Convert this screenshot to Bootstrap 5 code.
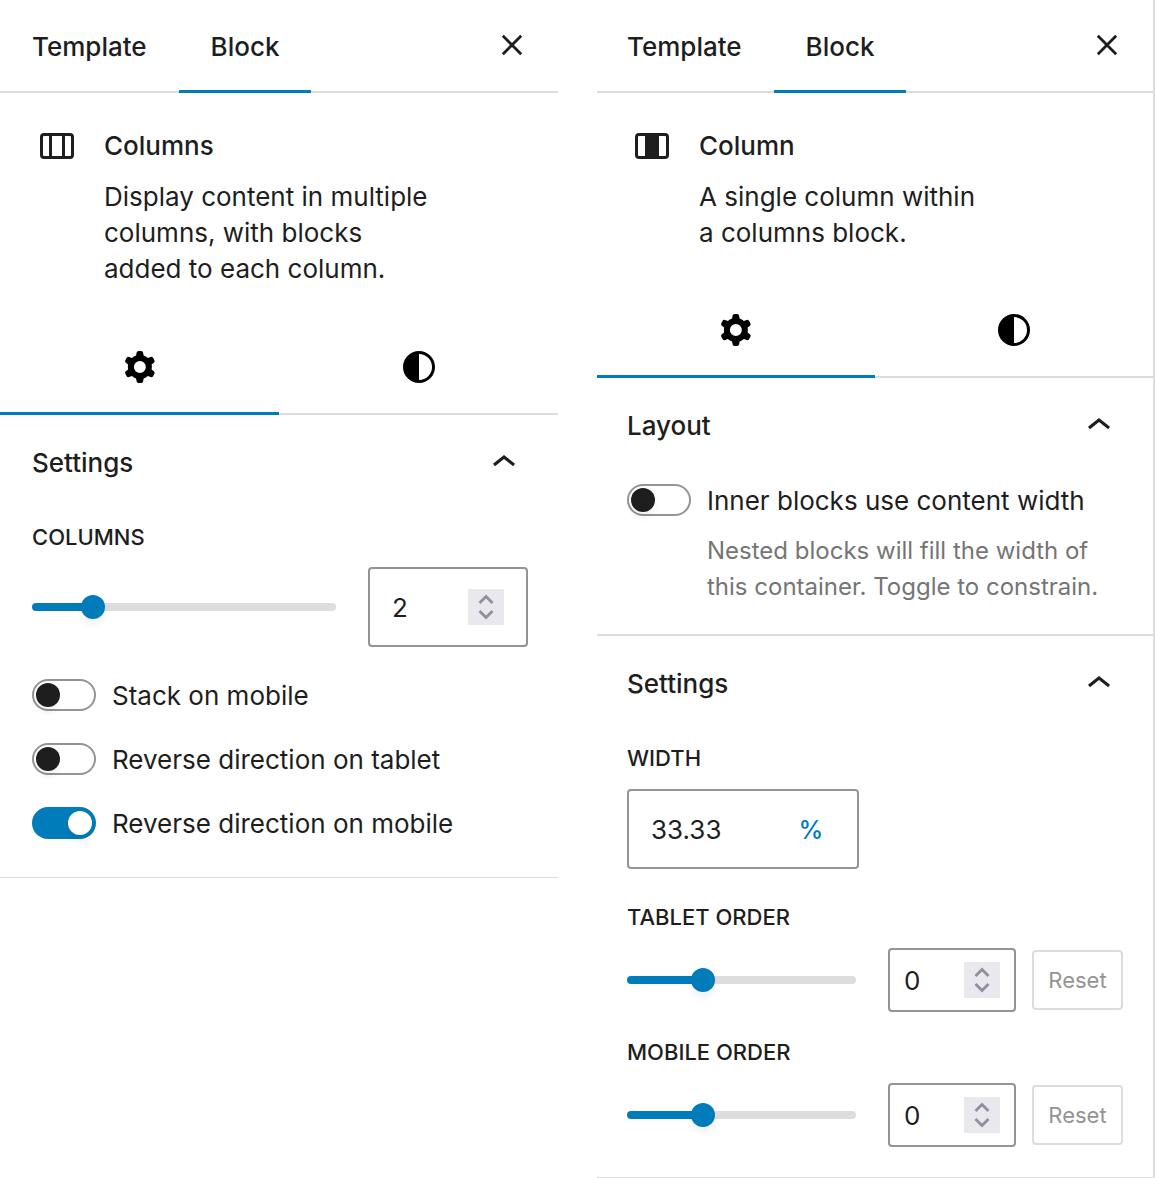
<!DOCTYPE html>
<html lang="en">
<head>
<meta charset="utf-8">
<meta name="viewport" content="width=device-width, initial-scale=1">
<title>Block settings</title>
<link href="https://cdn.jsdelivr.net/npm/bootstrap@5.3.0/dist/css/bootstrap.min.css" rel="stylesheet">
<style>
  :root { --ink: #1e1e1e; --accent: #007cba; --line: #ddd; --edge: #949494; }
  body { font-family: Inter, "Liberation Sans", sans-serif; font-size: 26px; line-height: 36px; color: var(--ink); background: #fff; }
  .sidebars { grid-template-columns: minmax(0, 1fr) minmax(0, 1fr); gap: 39px; }
  .inspector { --start: 32px; --card-end: 32px; --label-gap: 14px; }
  .inspector-edge { --start: 30px; --card-end: 31px; --label-gap: 15px; border-right: 2px solid var(--line); }
  button { color: inherit; }
  svg { display: block; fill: currentColor; }

  .tabs-top { border-bottom: 2px solid var(--line); padding-right: 22px; }
  .tabs-top .tab { height: 93px; margin-bottom: -2px; padding: 0 32px; border: 0; background: none; font-weight: 500; }
  .tabs-top .tab:first-child { padding-left: var(--start); }
  .tab.active { box-shadow: inset 0 -3px var(--accent); }

  .block-card { padding: 32px 30px var(--card-end) var(--start); gap: 24px; }
  .block-card h2 { font-size: 26px; line-height: 42px; font-weight: 500; margin-bottom: 12px; }

  .tabs-icons { border-bottom: 2px solid var(--line); color: #000; }
  .tabs-icons .tab { height: 96px; margin-bottom: -2px; border: 0; background: none; }

  .section-toggle { height: 96px; padding: 0 30px 0 var(--start); border: 0; background: none; font-weight: 500; }
  .section-body { padding: 10px 30px 30px var(--start); }
  .section-rule { border-bottom: 2px solid var(--line); }
  .section-end { border-bottom: 1px solid var(--line); }
  .section-roomy { padding-bottom: 38px; }

  .caps { display: block; font-size: 22px; line-height: 32px; font-weight: 500; text-transform: uppercase; margin-bottom: var(--label-gap); }

  .slider { height: 8px; border-radius: 4px; background: linear-gradient(to right, var(--accent) var(--fill), var(--line) var(--fill)); margin-right: 32px; min-width: 0; }
  .slider input { flex: none; width: calc(100% + 24px); height: 24px; margin: 0 -12px; appearance: none; background: none; }
  .slider input::-webkit-slider-thumb { appearance: none; width: 24px; height: 24px; border-radius: 50%; background: var(--accent); box-shadow: 0 6px 6px rgba(0,0,0,.05); }
  .slider input::-moz-range-thumb { width: 24px; height: 24px; border: 0; border-radius: 50%; background: var(--accent); }

  .field { border: 2px solid var(--edge); border-radius: 4px; height: 64px; width: 128px; padding: 0 14px; }
  .field-lg { height: 80px; width: 160px; padding: 0 22px; }
  .field-half { width: calc(50% - 16px); }
  .field input { flex: 1; min-width: 0; border: 0; padding: 2px 0 0; background: none; color: var(--ink); appearance: textfield; outline: 0; }
  .field input::-webkit-inner-spin-button { appearance: none; display: none; }
  .field select { width: 48px; border: 0; background: none; appearance: none; color: var(--accent); text-align: center; padding: 2px 0 0; font-size: 25px; font-weight: 500; outline: 0; }
  .spinner { width: 36px; height: 36px; background: #e9e8ed; color: #8f8f9d; flex: none; }
  .reset { width: 91px; height: 60px; border: 2px solid var(--line); border-radius: 4px; background: none; color: var(--edge); font-size: 22px; padding: 0; margin-left: 16px; flex: none; }

  .toggles { gap: 32px; margin-top: 32px; }
  .toggle-row { gap: 16px; height: 32px; }
  .toggle-row .form-check-input { width: 64px; height: 32px; margin: 0; flex: none; border: 2px solid var(--edge); border-radius: 16px; background: #fff; padding: 2px; }
  .toggle-row .form-check-input::before { content: ""; display: block; width: 24px; height: 24px; border-radius: 50%; background: var(--ink); box-shadow: 0 6px 6px rgba(0,0,0,.05); }
  .toggle-row .form-check-input:checked { background: var(--accent); border-color: var(--accent); }
  .toggle-row .form-check-input:checked::before { background: #fff; margin-left: auto; }
  .toggle-row label { line-height: 32px; padding-top: 2px; }
  .help { margin: 17px 0 -1px 80px; font-size: 24px; color: #757575; white-space: nowrap; }
</style>
</head>
<body>
<svg width="0" height="0" class="position-absolute" aria-hidden="true">
  <symbol id="i-close" viewBox="0 0 48 48"><path d="M14.8 13.8 33.2 32.2M33.2 13.8 14.8 32.2" fill="none" stroke="currentColor" stroke-width="2.8"/></symbol>
  <symbol id="i-cog" viewBox="0 0 24 24"><path fill-rule="evenodd" d="M10.289 4.836A1 1 0 0111.275 4h1.306a1 1 0 01.987.836l.244 1.466c.787.26 1.503.679 2.108 1.218l1.393-.522a1 1 0 011.216.437l.653 1.13a1 1 0 01-.23 1.273l-1.148.944a6.025 6.025 0 010 2.435l1.149.946a1 1 0 01.23 1.272l-.653 1.13a1 1 0 01-1.216.437l-1.394-.522c-.605.54-1.32.958-2.108 1.218l-.244 1.466a1 1 0 01-.987.836h-1.306a1 1 0 01-.986-.836l-.244-1.466a5.995 5.995 0 01-2.108-1.218l-1.394.522a1 1 0 01-1.217-.436l-.653-1.131a1 1 0 01.23-1.272l1.149-.946a6.026 6.026 0 010-2.435l-1.148-.944a1 1 0 01-.23-1.272l.653-1.131a1 1 0 011.217-.437l1.393.522a5.994 5.994 0 012.108-1.218l.244-1.466zM14.929 12a3 3 0 11-6 0 3 3 0 016 0z"/></symbol>
  <symbol id="i-styles" viewBox="0 0 48 48"><path fill-rule="evenodd" d="M24 8a16 16 0 1 0 0 32 16 16 0 0 0 0-32zm0 3a13 13 0 0 1 0 26z"/></symbol>
  <symbol id="i-up" viewBox="0 0 24 24"><path d="M6.5 12.4L12 8l5.500 4.400-.9 1.200L12 10l-4.500 3.600-1-1.200z"/></symbol>
  <symbol id="i-columns" viewBox="0 0 48 48"><path fill-rule="evenodd" d="M12 11h26a4 4 0 0 1 4 4v18a4 4 0 0 1-4 4H12a4 4 0 0 1-4-4V15a4 4 0 0 1 4-4zm0 3a1 1 0 0 0-1 1v18a1 1 0 0 0 1 1h5V14zm8 0v20h10V14zm13 0v20h5a1 1 0 0 0 1-1V15a1 1 0 0 0-1-1z"/></symbol>
  <symbol id="i-column" viewBox="0 0 48 48"><path fill-rule="evenodd" d="M12 11h26a4 4 0 0 1 4 4v18a4 4 0 0 1-4 4H12a4 4 0 0 1-4-4V15a4 4 0 0 1 4-4zm0 3a1 1 0 0 0-1 1v18a1 1 0 0 0 1 1h6V14zm20 0v20h6a1 1 0 0 0 1-1V15a1 1 0 0 0-1-1z"/></symbol>
  <symbol id="i-spin" viewBox="0 0 36 36"><path d="M11.5 14 18 7.500l6.500 6.500M11.500 22l6.500 6.500 6.500-6.500" fill="none" stroke="currentColor" stroke-width="2.800"/></symbol>
</svg>

<main class="sidebars d-grid align-items-start">
  <section class="inspector" aria-label="Columns block">
    <div class="tabs-top d-flex align-items-center">
      <button type="button" class="tab">Template</button>
      <button type="button" class="tab active">Block</button>
      <button type="button" class="border-0 bg-transparent p-0 ms-auto" aria-label="Close"><svg width="48" height="48"><use href="#i-close"/></svg></button>
    </div>
    <div class="block-card d-flex align-items-start">
      <svg class="flex-shrink-0" width="48" height="42" viewBox="0 3 48 42"><use href="#i-columns" width="48" height="48"/></svg>
      <div>
        <h2>Columns</h2>
        <p class="mb-0">Display content in multiple<br>columns, with blocks<br>added to each column.</p>
      </div>
    </div>
    <div class="tabs-icons d-flex">
      <button type="button" class="tab active flex-fill d-flex align-items-center justify-content-center" aria-label="Settings"><svg width="48" height="48"><use href="#i-cog"/></svg></button>
      <button type="button" class="tab flex-fill d-flex align-items-center justify-content-center" aria-label="Styles"><svg width="48" height="48"><use href="#i-styles"/></svg></button>
    </div>
    <div class="section-end">
      <button type="button" class="section-toggle w-100 d-flex align-items-center justify-content-between" aria-expanded="true">Settings<svg width="48" height="48"><use href="#i-up"/></svg></button>
      <div class="section-body section-roomy">
        <label class="caps" for="cols">Columns</label>
        <div class="d-flex align-items-center">
          <div class="slider d-flex align-items-center flex-fill" style="--fill: 20%"><input type="range" min="1" max="6" value="2" aria-label="Columns slider"></div>
          <div class="field field-lg d-flex align-items-center"><input id="cols" type="number" value="2"><svg class="spinner"><use href="#i-spin"/></svg></div>
        </div>
        <div class="toggles d-flex flex-column">
          <div class="toggle-row d-flex align-items-center"><input class="form-check-input" type="checkbox" role="switch" id="stack"><label for="stack">Stack on mobile</label></div>
          <div class="toggle-row d-flex align-items-center"><input class="form-check-input" type="checkbox" role="switch" id="rev-t"><label for="rev-t">Reverse direction on tablet</label></div>
          <div class="toggle-row d-flex align-items-center"><input class="form-check-input" type="checkbox" role="switch" id="rev-m" checked><label for="rev-m">Reverse direction on mobile</label></div>
        </div>
      </div>
    </div>
  </section>

  <section class="inspector inspector-edge" aria-label="Column block">
    <div class="tabs-top d-flex align-items-center">
      <button type="button" class="tab">Template</button>
      <button type="button" class="tab active">Block</button>
      <button type="button" class="border-0 bg-transparent p-0 ms-auto" aria-label="Close"><svg width="48" height="48"><use href="#i-close"/></svg></button>
    </div>
    <div class="block-card d-flex align-items-start">
      <svg class="flex-shrink-0" width="48" height="42" viewBox="0 3 48 42"><use href="#i-column" width="48" height="48"/></svg>
      <div>
        <h2>Column</h2>
        <p class="mb-0">A single column within<br>a columns block.</p>
      </div>
    </div>
    <div class="tabs-icons d-flex">
      <button type="button" class="tab active flex-fill d-flex align-items-center justify-content-center" aria-label="Settings"><svg width="48" height="48"><use href="#i-cog"/></svg></button>
      <button type="button" class="tab flex-fill d-flex align-items-center justify-content-center" aria-label="Styles"><svg width="48" height="48"><use href="#i-styles"/></svg></button>
    </div>
    <div class="section-rule">
      <button type="button" class="section-toggle w-100 d-flex align-items-center justify-content-between" aria-expanded="true">Layout<svg width="48" height="48"><use href="#i-up"/></svg></button>
      <div class="section-body">
        <div class="toggle-row d-flex align-items-center"><input class="form-check-input" type="checkbox" role="switch" id="inner" aria-describedby="inner-help"><label for="inner">Inner blocks use content width</label></div>
        <p class="help" id="inner-help">Nested blocks will fill the width of<br>this container. Toggle to constrain.</p>
      </div>
    </div>
    <div class="section-end">
      <button type="button" class="section-toggle w-100 d-flex align-items-center justify-content-between" aria-expanded="true">Settings<svg width="48" height="48"><use href="#i-up"/></svg></button>
      <div class="section-body">
        <label class="caps" for="width">Width</label>
        <div class="field field-lg field-half d-flex align-items-center mb-2"><input id="width" type="text" inputmode="decimal" value="33.33"><select aria-label="Unit"><option>%</option><option>px</option></select></div>
        <div class="pt-4">
          <label class="caps" for="tab-order">Tablet order</label>
          <div class="d-flex align-items-center">
            <div class="slider d-flex align-items-center flex-fill" style="--fill: 33.33%"><input type="range" min="-5" max="10" value="0" aria-label="Tablet order slider"></div>
            <div class="field d-flex align-items-center"><input id="tab-order" type="number" value="0"><svg class="spinner"><use href="#i-spin"/></svg></div>
            <button type="button" class="reset" disabled>Reset</button>
          </div>
        </div>
        <div class="pt-4">
          <label class="caps" for="mob-order">Mobile order</label>
          <div class="d-flex align-items-center">
            <div class="slider d-flex align-items-center flex-fill" style="--fill: 33.33%"><input type="range" min="-5" max="10" value="0" aria-label="Mobile order slider"></div>
            <div class="field d-flex align-items-center"><input id="mob-order" type="number" value="0"><svg class="spinner"><use href="#i-spin"/></svg></div>
            <button type="button" class="reset" disabled>Reset</button>
          </div>
        </div>
      </div>
    </div>
  </section>
</main>
<script src="https://cdn.jsdelivr.net/npm/bootstrap@5.3.0/dist/js/bootstrap.bundle.min.js"></script>
</body>
</html>
